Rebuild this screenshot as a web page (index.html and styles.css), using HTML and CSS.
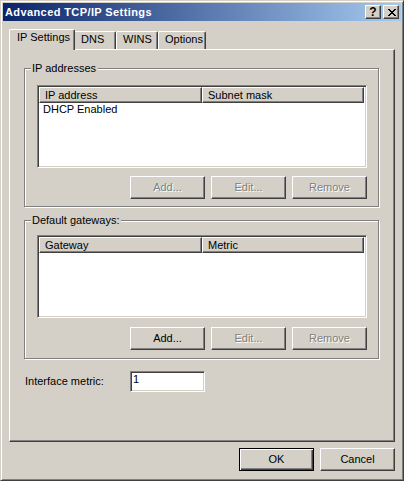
FILE: index.html
```html
<!DOCTYPE html>
<html>
<head>
<meta charset="utf-8">
<title>Advanced TCP/IP Settings</title>
<link rel="stylesheet" href="styles.css">
</head>
<body>
<div class="window">
  <div class="titlebar">
    <span class="title">Advanced TCP/IP Settings</span>
    <div class="caption-btns">
      <div class="cap-btn help">?</div>
      <div class="cap-btn close">
        <svg width="8" height="7" viewBox="0 0 8 7" shape-rendering="crispEdges"><path fill="#000" d="M0 0h2v1H0z M6 0h2v1H6z M1 1h2v1H1z M5 1h2v1H5z M2 2h4v1H2z M3 3h2v1H3z M2 4h4v1H2z M1 5h2v1H1z M5 5h2v1H5z M0 6h2v1H0z M6 6h2v1H6z"/></svg>
      </div>
    </div>
  </div>
  <div class="body">
    <div class="tabs">
      <div class="tab selected w-ip">IP Settings</div>
      <div class="tab w-dns">DNS</div>
      <div class="tab w-wins">WINS</div>
      <div class="tab w-opt">Options</div>
    </div>
    <div class="panel">
      <div class="group">
        <span class="group-label">IP addresses</span>
        <div class="listview">
          <div class="lv-header">
            <div class="lv-col c1">IP address</div>
            <div class="lv-col c2">Subnet mask</div>
          </div>
          <div class="lv-row">DHCP Enabled</div>
        </div>
        <div class="btn-row">
          <div class="btn disabled">Add...</div>
          <div class="btn disabled">Edit...</div>
          <div class="btn disabled">Remove</div>
        </div>
      </div>
      <div class="group group-gw">
        <span class="group-label">Default gateways:</span>
        <div class="listview">
          <div class="lv-header">
            <div class="lv-col c1">Gateway</div>
            <div class="lv-col c2">Metric</div>
          </div>
        </div>
        <div class="btn-row">
          <div class="btn">Add...</div>
          <div class="btn disabled">Edit...</div>
          <div class="btn disabled">Remove</div>
        </div>
      </div>
      <div class="metric-row">
        <span class="metric-label">Interface metric:</span>
        <div class="field">1</div>
      </div>
    </div>
    <div class="dialog-btns">
      <div class="btn default">OK</div>
      <div class="btn">Cancel</div>
    </div>
  </div>
</div>
</body>
</html>
```

FILE: styles.css
```css
* { box-sizing: border-box; }
html, body { margin: 0; padding: 0; }
body {
  width: 404px;
  height: 481px;
  overflow: hidden;
  background: #D4D0C8;
  font-family: "Liberation Sans", Arial, sans-serif;
  font-size: 11px;
  line-height: 13px;
  color: #000;
}
.window {
  width: 404px;
  height: 481px;
  border: 1px solid;
  border-color: #D4D0C8 #404040 #404040 #D4D0C8;
  box-shadow: inset 1px 1px #fff, inset -1px -1px #808080;
  padding: 2px;
  display: flex;
  flex-direction: column;
}
.titlebar {
  height: 18px;
  flex: none;
  display: flex;
  align-items: center;
  padding: 0 2px;
  background: linear-gradient(to right, #0A246A, #A6CAF0);
}
.title {
  flex: 1;
  color: #fff;
  font-weight: bold;
  letter-spacing: 0.4px;
  white-space: nowrap;
}
.caption-btns { display: flex; gap: 2px; }
.cap-btn {
  width: 16px;
  height: 14px;
  background: #D4D0C8;
  border: 1px solid;
  border-color: #fff #404040 #404040 #fff;
  box-shadow: inset -1px -1px #808080;
  display: flex;
  align-items: center;
  justify-content: center;
  font-weight: bold;
  font-size: 12px;
  line-height: 12px;
}
.cap-btn.close { padding-left: 1px; }
.cap-btn svg { display: block; }

.body {
  flex: 1;
  display: flex;
  flex-direction: column;
  padding: 8px 6px 7px 6px;
}
.tabs {
  height: 20px;
  flex: none;
  display: flex;
  align-items: flex-end;
  padding-left: 2px;
  position: relative;
  z-index: 1;
}
.tab {
  height: 18px;
  flex: none;
  border: 1px solid;
  border-bottom: none;
  border-color: #fff #404040 #404040 #fff;
  border-radius: 2px 2px 0 0;
  box-shadow: inset -1px 0 #808080;
  padding: 1px 0 0 6px;
  white-space: nowrap;
  background: #D4D0C8;
}
.tab.selected {
  height: 21px;
  margin: 0 -2px -1px -2px;
  padding-left: 7px;
  position: relative;
  z-index: 2;
}
.w-ip { width: 66px; }
.w-dns { width: 43px; padding-left: 7px; }
.w-wins { width: 42px; }
.w-opt { width: 48px; }

.panel {
  height: 393px;
  flex: none;
  border: 1px solid;
  border-color: #fff #404040 #404040 #fff;
  box-shadow: inset -1px -1px #808080;
  padding: 18px 0 0 14px;
  display: flex;
  flex-direction: column;
  align-items: flex-start;
}
.group {
  width: 355px;
  height: 139px;
  flex: none;
  border: 1px solid #808080;
  box-shadow: inset 1px 1px #fff, 1px 1px #fff;
  display: flex;
  flex-direction: column;
  align-items: flex-start;
}
.group + .group { margin-top: 13px; }
.group-label {
  margin: -7px 0 0 6px;
  padding: 0 2px 0 1px;
  background: #D4D0C8;
  line-height: 13px;
}
.listview {
  width: 330px;
  height: 83px;
  flex: none;
  margin: 10px 0 0 12px;
  background: #fff;
  border: 1px solid;
  border-color: #808080 #fff #fff #808080;
  box-shadow: inset 1px 1px #404040, inset -1px -1px #D4D0C8;
  padding: 1px;
}
.group-gw .listview { margin-top: 8px; }
.lv-header { display: flex; height: 16px; }
.lv-col {
  height: 16px;
  border: 1px solid;
  border-color: #fff #404040 #404040 #fff;
  box-shadow: inset -1px -1px #808080;
  background: #D4D0C8;
  padding-left: 5px;
  display: flex;
  align-items: center;
  white-space: nowrap;
}
.c1 { width: 163px; }
.c2 { width: 162px; }
.lv-row { height: 13px; padding-left: 4px; white-space: nowrap; }

.btn-row {
  display: flex;
  gap: 6px;
  margin: 8px 0 0 105px;
}
.group-gw .btn-row { margin-top: 9px; }
.btn {
  width: 75px;
  height: 23px;
  flex: none;
  background: #D4D0C8;
  border: 1px solid;
  border-color: #fff #404040 #404040 #fff;
  box-shadow: inset -1px -1px #808080;
  display: flex;
  align-items: center;
  justify-content: center;
  padding-bottom: 1px;
  white-space: nowrap;
}
.btn.disabled { color: #808080; text-shadow: 1px 1px 0 #fff; }
.btn.default {
  border: 1px solid #000;
  box-shadow: inset 1px 1px #fff, inset -1px -1px #404040, inset -2px -2px #808080;
}

.metric-row {
  display: flex;
  align-items: center;
  margin-top: 12px;
}
.metric-label { width: 106px; padding-left: 1px; white-space: nowrap; }
.field {
  width: 75px;
  height: 21px;
  background: #fff;
  border: 1px solid;
  border-color: #808080 #fff #fff #808080;
  box-shadow: inset 1px 1px #404040, inset -1px -1px #D4D0C8;
  padding: 1px 0 0 2px;
  line-height: 13px;
}
.dialog-btns {
  display: flex;
  justify-content: flex-end;
  gap: 6px;
  margin-top: 6px;
}
```
